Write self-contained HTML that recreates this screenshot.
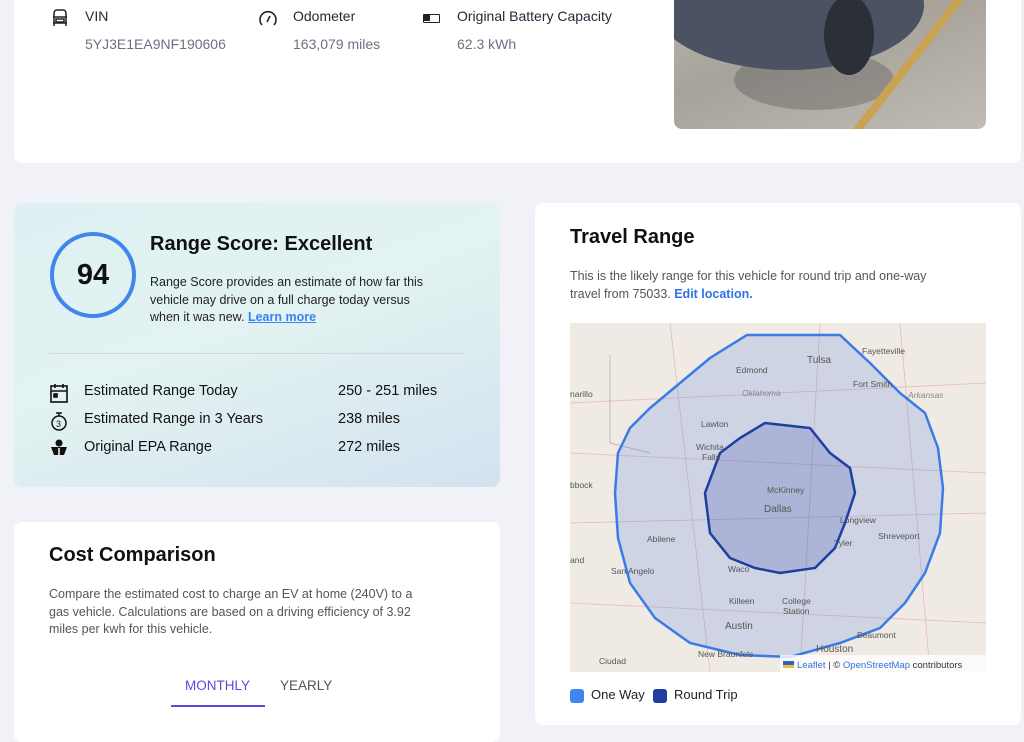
<!DOCTYPE html>
<html><head><style>
*{margin:0;padding:0;box-sizing:border-box}
body{width:1024px;height:727px;overflow:hidden;background:#f0f2f7;font-family:"Liberation Sans",sans-serif;color:#111827;position:relative}
.card{position:absolute;background:#fff;border-radius:8px}
.abs{position:absolute}
.lbl{font-size:14px;color:#1f2937;white-space:nowrap}
.val{font-size:14px;color:#6b7280;white-space:nowrap}
</style></head><body>
<div class="card" style="left:14px;top:-10px;width:1007px;height:173px"></div>
<svg class="abs" style="left:50px;top:8px" width="20" height="20" viewBox="0 0 20 20" fill="none" stroke="#222" stroke-width="1.5"><path d="M4 18V5a3 3 0 0 1 3-3h6a3 3 0 0 1 3 3v13M3 9h14M3 15h14"/><rect x="6" y="11" width="8" height="3"/></svg>
<div class="abs lbl" style="left:85px;top:8px">VIN</div>
<div class="abs val" style="left:85px;top:36px">5YJ3E1EA9NF190606</div>
<svg class="abs" style="left:258px;top:8px" width="20" height="20" viewBox="0 0 20 20" fill="none" stroke="#222" stroke-width="1.6"><path d="M4 17a8 8 0 1 1 12 0"/><path d="M9 14l3-6"/></svg>
<div class="abs lbl" style="left:293px;top:8px">Odometer</div>
<div class="abs val" style="left:293px;top:36px">163,079 miles</div>
<div class="abs" style="left:423px;top:14px;width:17px;height:9px;border:1.5px solid #222;border-radius:1px"><div style="width:6px;height:6px;background:#222"></div></div>
<div class="abs lbl" style="left:457px;top:8px">Original Battery Capacity</div>
<div class="abs val" style="left:457px;top:36px">62.3 kWh</div>
<div class="abs" style="left:674px;top:0;width:312px;height:129px;border-radius:0 0 8px 8px;background:linear-gradient(160deg,#b9b4ac 0%,#a7a29a 40%,#c1bcb3 100%);overflow:hidden">
<div class="abs" style="left:60px;top:50px;width:160px;height:60px;border-radius:50%;background:rgba(80,80,80,.35)"></div>
<div class="abs" style="left:-20px;top:-60px;width:270px;height:130px;border-radius:50%;background:#4b5262"></div>
<div class="abs" style="left:150px;top:-5px;width:50px;height:80px;border-radius:50%;background:#2b2f37"></div>
<div class="abs" style="left:230px;top:-20px;width:8px;height:170px;background:#c9a254;transform:rotate(38deg)"></div>
</div>

<div class="card" style="left:14px;top:203px;width:486px;height:284px;background:linear-gradient(160deg,#def0f3 0%,#e3f3f1 45%,#d3e2ef 100%)"></div>
<div class="abs" style="left:50px;top:232px;width:86px;height:86px;border:4px solid #3f87ee;border-radius:50%;text-align:center;line-height:78px;font-size:29px;font-weight:bold;color:#111">94</div>
<div class="abs" style="left:150px;top:233px;font-size:20px;font-weight:bold;color:#111">Range Score: Excellent</div>
<div class="abs" style="left:150px;top:274px;width:288px;font-size:12.5px;line-height:17.5px;color:#222">Range Score provides an estimate of how far this vehicle may drive on a full charge today versus when it was new. <span style="color:#3b82f6;text-decoration:underline;font-weight:bold">Learn more</span></div>
<div class="abs" style="left:49px;top:353px;width:416px;height:1px;background:#cfd8dc"></div>
<svg class="abs" style="left:50px;top:383px" width="18" height="20" viewBox="0 0 18 20" fill="none" stroke="#111" stroke-width="1.6"><rect x="1" y="3" width="16" height="16"/><path d="M1 8h16M5 1v4M13 1v4"/><rect x="4" y="11" width="3" height="3" fill="#111"/></svg>
<svg class="abs" style="left:50px;top:411px" width="18" height="20" viewBox="0 0 18 20" fill="none" stroke="#111" stroke-width="1.5"><circle cx="9" cy="12" r="7"/><path d="M6 2h6M9 2v3"/><text x="6" y="16" font-size="9" fill="#111" stroke="none" font-family="Liberation Sans">3</text></svg>
<svg class="abs" style="left:50px;top:438px" width="18" height="20" viewBox="0 0 18 20"><circle cx="9" cy="5" r="3.5" fill="#111"/><path d="M1 9h16l-3 8H4z" fill="#111"/><path d="M9 10v7" stroke="#fff" stroke-width="1.5"/></svg>
<div class="abs" style="left:84px;top:383px;font-size:14.5px;color:#111">Estimated Range Today</div>
<div class="abs" style="left:84px;top:411px;font-size:14.5px;color:#111">Estimated Range in 3 Years</div>
<div class="abs" style="left:84px;top:439px;font-size:14.5px;color:#111">Original EPA Range</div>
<div class="abs" style="left:338px;top:383px;font-size:14.5px;color:#111">250 - 251 miles</div>
<div class="abs" style="left:338px;top:411px;font-size:14.5px;color:#111">238 miles</div>
<div class="abs" style="left:338px;top:439px;font-size:14.5px;color:#111">272 miles</div>

<div class="card" style="left:14px;top:522px;width:486px;height:220px"></div>
<div class="abs" style="left:49px;top:544px;font-size:20px;font-weight:bold;color:#111">Cost Comparison</div>
<div class="abs" style="left:49px;top:586px;width:385px;font-size:12.5px;line-height:17.5px;color:#555">Compare the estimated cost to charge an EV at home (240V) to a gas vehicle. Calculations are based on a driving efficiency of 3.92 miles per kwh for this vehicle.</div>
<div class="abs" style="left:185px;top:678px;font-size:13.5px;color:#5b4bdb">MONTHLY</div>
<div class="abs" style="left:280px;top:678px;font-size:13.5px;color:#555">YEARLY</div>
<div class="abs" style="left:171px;top:705px;width:94px;height:2px;background:#5b4bdb"></div>

<div class="card" style="left:535px;top:203px;width:486px;height:522px"></div>
<div class="abs" style="left:570px;top:226px;font-size:20px;font-weight:bold;color:#111">Travel Range</div>
<div class="abs" style="left:570px;top:267px;width:370px;font-size:12.5px;line-height:18px;color:#555">This is the likely range for this vehicle for round trip and one-way travel from 75033. <span style="color:#2f74e0;font-weight:bold">Edit location.</span></div>
<svg class="abs" style="left:570px;top:323px" width="416" height="349" viewBox="0 0 416 349">
<rect width="416" height="349" fill="#efebe4"/>
<g stroke="#e4b8c0" stroke-width="0.8" fill="none"><path d="M0 80L416 60M0 200L416 190M0 280L416 300M100 0L140 349M250 0L230 349M330 0L360 349M0 130L416 150"/></g>
<path d="M40 32V120L80 130" stroke="#aaa" fill="none" stroke-width="0.7"/>
<path d="M177 12L270 12L300 40L330 70L355 90L368 125L373 165L370 210L355 250L335 280L310 305L270 320L220 334L170 332L120 320L85 295L60 260L48 215L45 170L48 130L60 105L80 85L110 60L140 35Z" fill="rgba(90,130,225,0.22)" stroke="#3b7be8" stroke-width="2.5"/>
<path d="M195 100L240 105L260 130L280 145L285 170L275 200L265 225L245 245L210 250L185 245L160 235L140 210L135 170L150 130L170 115Z" fill="rgba(40,60,170,0.2)" stroke="#1e3ea0" stroke-width="2.5"/>
<g font-family="Liberation Sans" font-size="8.5" fill="#555">
<text x="237" y="40" font-size="10">Tulsa</text><text x="166" y="50">Edmond</text><text x="172" y="73" font-style="italic" fill="#888">Oklahoma</text>
<text x="292" y="31">Fayetteville</text><text x="283" y="64">Fort Smith</text><text x="0" y="74">narillo</text>
<text x="131" y="104">Lawton</text><text x="126" y="127">Wichita</text><text x="132" y="137">Falls</text>
<text x="197" y="170">McKinney</text><text x="194" y="189" font-size="10">Dallas</text><text x="0" y="165">bbock</text>
<text x="270" y="200">Longview</text><text x="308" y="216">Shreveport</text><text x="77" y="219">Abilene</text><text x="264" y="223">Tyler</text>
<text x="0" y="240">and</text><text x="41" y="251">San Angelo</text><text x="158" y="249">Waco</text>
<text x="159" y="281">Killeen</text><text x="212" y="281">College</text><text x="213" y="291">Station</text>
<text x="155" y="306" font-size="10">Austin</text><text x="287" y="315">Beaumont</text><text x="128" y="334">New Braunfels</text>
<text x="246" y="329" font-size="10">Houston</text><text x="29" y="341">Ciudad</text><text x="338" y="75" font-style="italic" fill="#888">Arkansas</text>
</g>
<rect x="210" y="332" width="206" height="17" fill="rgba(255,255,255,0.8)"/>
<rect x="213" y="338" width="11" height="4" fill="#3060c0"/><rect x="213" y="342" width="11" height="3" fill="#f0c030"/>
<text x="227" y="345" font-family="Liberation Sans" font-size="9.5" fill="#333"><tspan fill="#2f74e0">Leaflet</tspan> | © <tspan fill="#2f74e0">OpenStreetMap</tspan> contributors</text>
</svg>
<div class="abs" style="left:570px;top:689px;width:14px;height:14px;border-radius:3px;background:#3f87ee"></div>
<div class="abs" style="left:591px;top:687px;font-size:13px;color:#222">One Way</div>
<div class="abs" style="left:653px;top:689px;width:14px;height:14px;border-radius:3px;background:#1e3ea0"></div>
<div class="abs" style="left:674px;top:687px;font-size:13px;color:#222">Round Trip</div>
</body></html>
